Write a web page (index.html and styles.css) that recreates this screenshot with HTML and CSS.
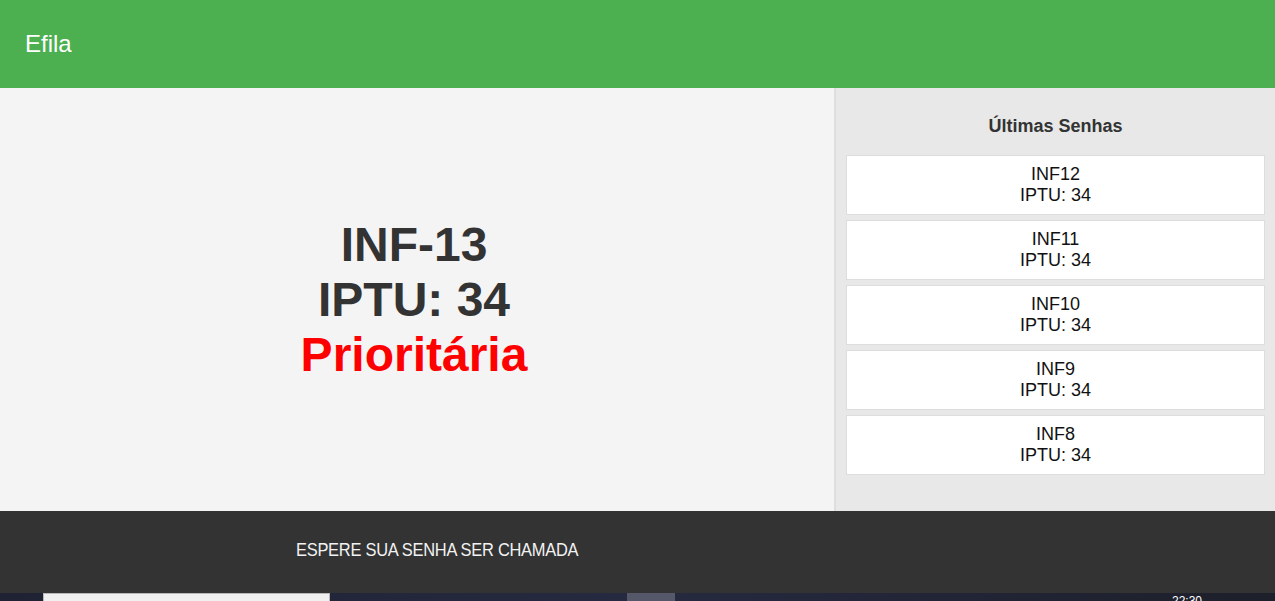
FILE: index.html
```html
<!DOCTYPE html>
<html lang="pt-BR">
<head>
  <meta charset="UTF-8" />
  <meta name="viewport" content="width=device-width, initial-scale=1.0" />
  <title>Efila</title>
  <link rel="stylesheet" href="styles.css">
</head>
<body>
  <header class="topbar">Efila</header>

  <main class="painel">
    <section class="senha-atual">
      <div class="codigo">INF-13</div>
      <div class="servico">IPTU: 34</div>
      <div class="tipo">Prioritária</div>
    </section>

    <aside class="ultimas">
      <h3>Últimas Senhas</h3>
      <div class="card">INF12<br>IPTU: 34</div>
      <div class="card">INF11<br>IPTU: 34</div>
      <div class="card">INF10<br>IPTU: 34</div>
      <div class="card">INF9<br>IPTU: 34</div>
      <div class="card">INF8<br>IPTU: 34</div>
    </aside>
  </main>

  <footer class="rodape">
    <span>ESPERE SUA SENHA SER CHAMADA</span>
  </footer>

  <div class="taskbar">
    <div class="search"></div>
    <div class="task-btn"></div>
    <div class="clock">22:30</div>
  </div>
</body>
</html>
```

FILE: styles.css
```css
:root {
  --green: #4caf50;
  --panel: #f4f4f4;
  --side: #e8e8e8;
  --dark: #333;
}

* {
  box-sizing: border-box;
}

body {
  margin: 0;
  font-family: "Liberation Sans", Arial, sans-serif;
  color: var(--dark);
  height: 601px;
  overflow: hidden;
}

.topbar {
  background: var(--green);
  color: #fff;
  font-size: 24px;
  height: 88px;
  padding: 0 25px;
  display: flex;
  align-items: center;
}

.painel {
  display: flex;
  height: 423px;
}

.senha-atual {
  width: 836px;
  background: var(--panel);
  display: flex;
  flex-direction: column;
  justify-content: center;
  align-items: center;
  padding-right: 6px;
  font-size: 48px;
  font-weight: bold;
  border-right: 2px solid #dedede;
}

.senha-atual .tipo {
  color: #ff0000;
}

.ultimas {
  flex: 1;
  background: var(--side);
  padding: 10px;
}

.ultimas h3 {
  margin: 18px 0;
  font-size: 18px;
  line-height: 21px;
  text-align: center;
  color: var(--dark);
}

.card {
  background: #fff;
  border: 1px solid #dddddd;
  padding: 8px;
  margin-bottom: 5px;
  text-align: center;
  font-size: 18px;
  line-height: 21px;
  color: #111;
}

.rodape {
  background: var(--dark);
  height: 82px;
  display: flex;
  align-items: center;
  padding: 0 0 4px 296px;
}

.rodape span {
  color: #f2f2f2;
  font-size: 19px;
  letter-spacing: -0.3px;
  transform: scaleX(0.865);
  transform-origin: left center;
  white-space: nowrap;
}

.taskbar {
  height: 8px;
  background: linear-gradient(to right, #1f2233, #262a40 50%, #1d1f2a);
  position: relative;
  overflow: hidden;
}

.taskbar .search {
  position: absolute;
  left: 43px;
  top: 0;
  width: 287px;
  height: 8px;
  background: #f0f0f0;
  border: 1px solid #b8b8b8;
  border-bottom: 0;
}

.taskbar .task-btn {
  position: absolute;
  left: 627px;
  top: 0;
  width: 48px;
  height: 8px;
  background: #555869;
}

.taskbar .clock {
  position: absolute;
  left: 1172px;
  top: 2px;
  color: #fff;
  font-size: 12px;
  line-height: 12px;
}
```
